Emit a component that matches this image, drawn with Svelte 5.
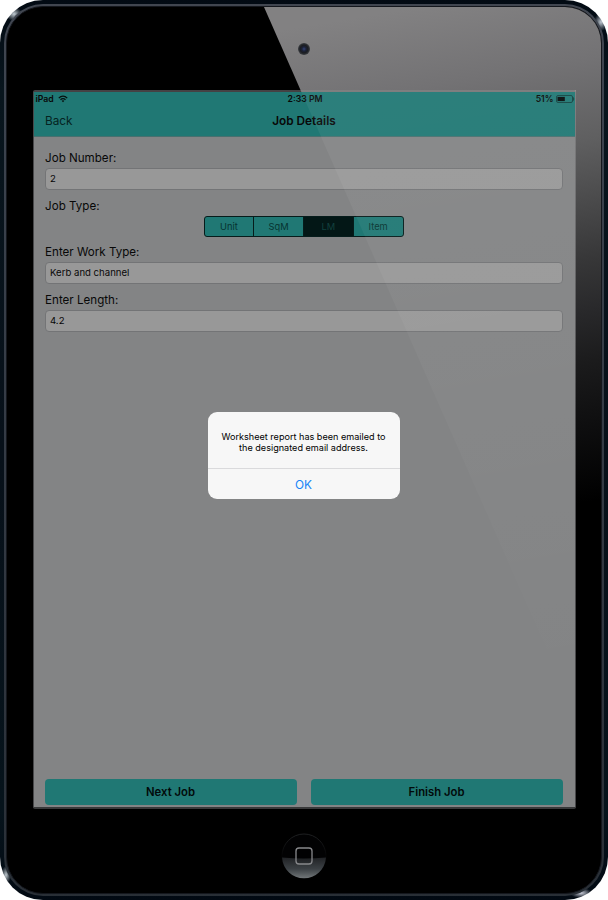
<script>
  const types = ['Unit', 'SqM', 'LM', 'Item'];
  const selected = 'LM';
</script>

<div class="device">
  <div class="rim">
    <div class="face">
      <svg class="gloss" width="594" height="886" viewBox="7 7 594 886" aria-hidden="true">
        <defs>
          <linearGradient id="bezelShine" gradientUnits="userSpaceOnUse" x1="400" y1="10" x2="490" y2="535">
            <stop offset="0" stop-color="#828182" />
            <stop offset=".15" stop-color="#737274" />
            <stop offset=".3" stop-color="#5f5f60" />
            <stop offset=".41" stop-color="#4b4b4c" />
            <stop offset=".52" stop-color="#373738" />
            <stop offset=".62" stop-color="#28282a" />
            <stop offset=".71" stop-color="#1b1b1c" />
            <stop offset=".82" stop-color="#0f0f10" />
            <stop offset=".97" stop-color="#000" />
          </linearGradient>
        </defs>
        <path d="M264 7H601V700H569Z" fill="url(#bezelShine)" />
      </svg>
      <div class="top"><svg width="14" height="14" viewBox="0 0 14 14" aria-hidden="true">
        <defs><radialGradient id="lens"><stop offset="0" stop-color="#344478" /><stop offset=".35" stop-color="#1c2238" /><stop offset=".65" stop-color="#1b1d21" /><stop offset="1" stop-color="#3b3e42" /></radialGradient></defs>
        <circle cx="7" cy="7" r="6" fill="url(#lens)" />
      </svg></div>
      <main class="screen">
        <header>
          <div class="status">
            <span class="carrier">iPad
              <svg width="10" height="8" viewBox="0 0 10 8" fill="none" stroke="#06100f" stroke-width="1.3" aria-hidden="true">
                <path d="M.8 3.1C3.2.5 6.8.5 9.2 3.1M2.5 4.8C4 3.3 6 3.3 7.5 4.8" /><path d="M3.6 5.8C4.4 5 5.6 5 6.4 5.8L5 7.3Z" fill="#06100f" stroke="none" />
              </svg>
            </span>
            <span class="time">2:33 PM</span>
            <span class="power">51%
              <svg width="19" height="8" viewBox="0 0 19 8" aria-hidden="true"><rect x=".5" y=".5" width="16" height="7" rx="1.5" fill="none" stroke="#124442" /><rect x="1.5" y="1.9" width="7.3" height="4.2" fill="#050b0b" /><path d="M17.2 2.5Q18.5 4 17.2 5.5Z" fill="#124442" stroke="#124442" /></svg>
            </span>
          </div>
          <nav><span class="back">Back</span><b>Job Details</b><span></span></nav>
        </header>
        <section class="form">
          <div class="label">Job Number:</div>
          <div class="field">2</div>
          <div class="label second">Job Type:</div>
          <div class="segments">
            {#each types as type}<span class:active={type === selected}>{type}</span>{/each}
          </div>
          <div class="label third">Enter Work Type:</div>
          <div class="field">Kerb and channel</div>
          <div class="label fourth">Enter Length:</div>
          <div class="field">4.2</div>
        </section>
        <footer><button>Next Job</button><button>Finish Job</button></footer>
        <svg class="reflection" width="543" height="719" viewBox="33 90 543 719" aria-hidden="true">
          <defs>
            <linearGradient id="screenShine" gradientUnits="userSpaceOnUse" x1="400" y1="10" x2="520" y2="700"><stop offset="0" stop-color="#fff" stop-opacity=".062" /><stop offset="1" stop-color="#fff" stop-opacity="0" /></linearGradient>
            <linearGradient id="edgeShine" gradientUnits="userSpaceOnUse" x1="0" y1="90" x2="0" y2="420"><stop offset="0" stop-color="#fff" stop-opacity=".28" /><stop offset="1" stop-color="#fff" stop-opacity="0" /></linearGradient>
          </defs>
          <path d="M300.5 90H576V716Z" fill="url(#screenShine)" />
          <path d="M300.5 90H576V420H575V92H301.4Z" fill="url(#edgeShine)" />
        </svg>
        <div class="dialog" role="alertdialog">
          <p>Worksheet report has been emailed to<br />the designated email address.</p>
          <button>OK</button>
        </div>
      </main>
      <div class="bottom">
        <svg width="46" height="48" viewBox="0 0 46 48" aria-hidden="true">
          <defs>
            <linearGradient id="home" x2="0" y2="1"><stop offset="0" stop-color="#202225" /><stop offset=".55" stop-color="#3c4145" /><stop offset="1" stop-color="#727779" /></linearGradient>
            <linearGradient id="ring" x2="0" y2="1"><stop offset="0" stop-color="#26282a" /><stop offset=".5" stop-color="#050506" /></linearGradient>
          </defs>
          <circle cx="23" cy="24" r="22" fill="#020203" stroke="url(#ring)" stroke-width=".8" />
          <path d="M1 25.5Q23 27.5 45 25.5C44 38 34.5 46.3 23 46.3S2 38 1 25.5Z" fill="url(#home)" />
          <rect x="15" y="16" width="16" height="16" rx="3" fill="#000" fill-opacity=".12" stroke="#88898c" stroke-width="1.3" />
        </svg>
      </div>
    </div>
  </div>
</div>

<style>
  :global(body) { margin: 0; background: #fff; }
  * { box-sizing: border-box; }
  .device {
    width: 608px; height: 900px; padding: 4px; border-radius: 43px;
    background:
      radial-gradient(ellipse 8px 7px at 14px 14px, #c4cdd4, transparent),
      radial-gradient(ellipse 7px 9px at 601px 22px, #c0c8d2, transparent),
      radial-gradient(ellipse 5px 9px at 6px 875px, #bfc8ce, transparent),
      radial-gradient(ellipse 11px 5px at 581px 893px, #cdd0dc, transparent),
      linear-gradient(#020a13, #08151d 10%, #071019 50%, #06131b 90%, #020a13);
    font-family: Inter, "Liberation Sans", sans-serif; color: #080808;
  }
  .rim { height: 892px; padding: 2px; border-radius: 39px; background: linear-gradient(#414650, #3c434e 12%, #30363f 70%, #292f36); }
  .face { height: 888px; border: 1px solid #14171d; border-radius: 37px; background: #000; overflow: hidden; position: relative; display: flex; flex-direction: column; align-items: center; }
  .gloss { position: absolute; left: 0; top: 0; }
  .top { position: relative; height: 83px; display: flex; align-items: center; justify-content: center; flex-shrink: 0; }
  .top svg { margin-top: 1px; }
  .screen { position: relative; width: 543px; height: 719px; flex-shrink: 0; border: 1px solid #48484a; border-top: 2px solid #444244; border-bottom: 2px solid #38393a; border-radius: 2px; background: #838485; display: flex; flex-direction: column; }
  header { height: 45px; background: #207874; border-bottom: 1px solid #48706f; flex-shrink: 0; }
  .status { height: 14px; display: grid; grid-template-columns: 1fr auto 1fr; align-items: center; padding-left: 2px; font-size: 8.7px; font-weight: 600; line-height: 14px; }
  .carrier, .power { display: flex; align-items: center; gap: 4px; }
  .power { justify-content: flex-end; gap: 2px; }
  nav { height: 30px; display: grid; grid-template-columns: 1fr auto 1fr; align-items: center; padding: 0 11.5px; font-size: 11.8px; line-height: 30px; }
  nav b { font-weight: 600; }
  .back { color: #052321; }
  .form { flex: 1; padding: 13px 12px 0 11px; }
  .label { height: 18px; padding-left: .6px; line-height: 16px; font-size: 11.6px; }
  .second { margin-top: 8px; }
  .third { margin-top: 7px; }
  .fourth { margin-top: 8px; }
  .field { height: 22px; border: 1px solid #737476; border-radius: 4px; background: #989898; padding-left: 4.5px; font-size: 9.6px; line-height: 20px; }
  .segments { display: flex; width: 200px; height: 21px; margin: 0 auto; border: 1px solid #061c1b; border-radius: 3px; overflow: hidden; background: #207874; font-size: 9.3px; line-height: 19px; color: #063330; }
  .segments span { flex: 1; text-align: center; border-left: 1px solid #061c1b; }
  .segments span:first-child { border-left: 0; }
  .segments .active { background: #031716; color: #12413e; }
  footer { display: flex; gap: 14px; padding: 0 12px 2px 11px; }
  footer button { flex: 1; height: 26px; padding: 0; border: 0; border-radius: 4px; background: #207874; font: 600 11.3px/26px Inter, "Liberation Sans", sans-serif; color: #020a0a; }
  .reflection { position: absolute; left: -1px; top: -2px; }
  .dialog { position: absolute; left: 174px; top: 320px; width: 192px; height: 87px; border-radius: 9px; background: #f7f7f7; text-align: center; overflow: hidden; }
  .dialog p { height: 57px; margin: 0; padding-top: 19px; border-bottom: 1px solid #dadadc; font-size: 9.1px; line-height: 11.2px; color: #000; }
  .dialog button { display: block; width: 100%; height: 30px; padding: 0; border: 0; background: none; color: #1684f8; font: 11.8px/32px Inter, "Liberation Sans", sans-serif; }
  .bottom { height: 84px; padding-top: 23px; flex-shrink: 0; position: relative; }
</style>
